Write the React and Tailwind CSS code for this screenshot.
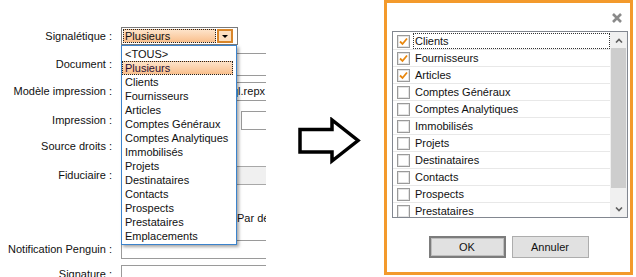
import React from "react";

const dropItems = [
  "<TOUS>",
  "Plusieurs",
  "Clients",
  "Fournisseurs",
  "Articles",
  "Comptes Généraux",
  "Comptes Analytiques",
  "Immobilisés",
  "Projets",
  "Destinataires",
  "Contacts",
  "Prospects",
  "Prestataires",
  "Emplacements",
];

const listItems = [
  ["Clients", true],
  ["Fournisseurs", true],
  ["Articles", true],
  ["Comptes Généraux", false],
  ["Comptes Analytiques", false],
  ["Immobilisés", false],
  ["Projets", false],
  ["Destinataires", false],
  ["Contacts", false],
  ["Prospects", false],
  ["Prestataires", false],
];

function Label({ children }) {
  return (
    <div className="w-[112px] flex-none text-right whitespace-nowrap text-[#111]">
      {children}
    </div>
  );
}

function LeftPanel() {
  return (
    <div className="relative w-[266px] h-[277px] flex-none overflow-hidden bg-white">
      <div className="flex flex-col pt-[27px]">
        {/* Signalétique */}
        <div className="flex items-center h-[18px]">
          <Label>Signalétique :</Label>
          <div className="ml-[9px] w-[117px] h-[18px] flex-none border border-[#7a7a7a] bg-white flex items-center pl-[1px] gap-[1px]">
            <div className="w-[93px] h-[14px] border border-dotted border-[#222] bg-gradient-to-b from-[#fde3c9] to-[#f9bf8c] flex items-center pl-[1px] leading-none text-[#111]">
              Plusieurs
            </div>
            <div className="w-[16px] h-[14px] border-2 border-[#d9862a] bg-[#fde0c0] flex items-center justify-center">
              <svg width="6" height="3" viewBox="0 0 6 3">
                <path d="M0 0 L6 0 L3 3 Z" fill="#000" />
              </svg>
            </div>
          </div>
        </div>
        {/* Document */}
        <div className="flex items-center h-[23px] mt-[8px]">
          <Label>Document :</Label>
          <div className="ml-[9px] w-[200px] h-[23px] flex-none border border-[#9a9a9a] bg-white" />
        </div>
        {/* Modèle impression */}
        <div className="flex items-center h-[19px] mt-[6px]">
          <Label>Modèle impression :</Label>
          <div className="ml-[9px] w-[150px] h-[19px] flex-none border border-[#9a9a9a] bg-white flex items-center justify-end pr-[5px] overflow-hidden whitespace-nowrap text-[#111]">
            C:\Modeles\SignaletiqueSql.repx
          </div>
        </div>
        {/* Impression */}
        <div className="flex items-center h-[19px] mt-[10px]">
          <Label>Impression :</Label>
          <div className="ml-[129px] w-[60px] h-[19px] flex-none border border-[#9a9a9a] bg-white" />
        </div>
        {/* Source droits */}
        <div className="flex items-center h-[19px] mt-[7px]">
          <Label>Source droits :</Label>
        </div>
        {/* Fiduciaire */}
        <div className="flex items-center h-[19px] mt-[10px]">
          <Label>Fiduciaire :</Label>
          <div className="ml-[9px] w-[200px] h-[19px] flex-none border border-[#a8a8a8] bg-[#f0f0f0]" />
        </div>
        {/* Par défaut */}
        <div className="flex items-center h-[19px] mt-[24px]">
          <div className="ml-[237px] whitespace-nowrap text-[#111]">Par défaut</div>
        </div>
        {/* Notification Penguin */}
        <div className="flex items-center h-[19px] mt-[12px]">
          <Label>Notification Penguin :</Label>
          <div className="ml-[9px] w-[200px] h-[19px] flex-none border border-[#9a9a9a] bg-white" />
        </div>
        {/* next row */}
        <div className="flex items-center h-[19px] mt-[6px]">
          <Label>Signature :</Label>
          <div className="ml-[9px] w-[200px] h-[19px] flex-none border border-[#9a9a9a] bg-white" />
        </div>
      </div>

      {/* Dropdown list overlay */}
      <div className="absolute left-[121px] top-[45px] w-[116px] h-[200px] border border-[#3b83cc] bg-white shadow-[2px_2px_3px_rgba(0,0,0,0.35)] pt-[1px] flex flex-col">
        {dropItems.map((it) =>
          it === "Plusieurs" ? (
            <div
              key={it}
              className="h-[14px] w-[111px] border border-dotted border-[#222] bg-gradient-to-b from-[#fde3c9] to-[#f9bf8c] flex items-center pl-[2px] leading-none whitespace-nowrap text-[#2a0f33]"
            >
              {it}
            </div>
          ) : (
            <div
              key={it}
              className="h-[14px] flex items-center pl-[3px] leading-none whitespace-nowrap text-[#111]"
            >
              {it}
            </div>
          )
        )}
      </div>
    </div>
  );
}

function Arrow() {
  return (
    <div className="w-[118px] h-[277px] flex-none flex items-start pt-[117px] pl-[31px]">
      <svg width="66" height="48" viewBox="0 0 66 48">
        <path
          d="M3 12.5 L35 12.5 L35 3 L61 23.5 L35 44 L35 35 L3 35 Z"
          fill="#fff"
          stroke="#000"
          strokeWidth="3.5"
          strokeLinejoin="miter"
        />
      </svg>
    </div>
  );
}

function Check() {
  return (
    <svg width="11" height="11" viewBox="0 0 11 11">
      <path d="M2 5.5 L4.5 8 L9 2.5" fill="none" stroke="#e8870f" strokeWidth="1.8" />
    </svg>
  );
}

function Dialog() {
  return (
    <div className="w-[249px] h-[275px] flex-none border-[3px] border-[#f39a2c] bg-white flex flex-col">
      <div className="h-[28px] flex justify-end items-start pt-[10px] pr-[8px]">
        <svg width="10" height="10" viewBox="0 0 10 10">
          <path d="M1 1 L9 9 M9 1 L1 9" stroke="#8a8a8a" strokeWidth="2.6" />
        </svg>
      </div>
      <div className="ml-[5px] mr-[2px] h-[187px] border border-[#828790] flex overflow-hidden">
        <div className="flex-1 flex flex-col overflow-hidden pt-[1px]">
          {listItems.map(([name, checked], i) => (
            <div
              key={name}
              className="h-[17px] flex-none flex items-center border-b border-[#e8e8e8]"
            >
              <div className="ml-[4px] w-[13px] h-[13px] flex-none border border-[#9a9a9a] bg-white flex items-center justify-center shadow-[inset_0_0_0_1px_#e4e4e4]">
                {checked ? <Check /> : null}
              </div>
              <div
                className={
                  "ml-[3px] h-[16px] flex-1 flex items-center pl-[2px] whitespace-nowrap text-[#111] " +
                  (i === 0 ? "outline outline-1 outline-dotted outline-[#333] -outline-offset-1" : "")
                }
              >
                {name}
              </div>
            </div>
          ))}
        </div>
        <div className="w-[17px] flex-none bg-[#f0f0f0] flex flex-col">
          <div className="h-[16px] flex items-center justify-center">
            <svg width="8" height="5" viewBox="0 0 8 5">
              <path d="M1 4.5 L4 1.5 L7 4.5" fill="none" stroke="#606060" strokeWidth="1.6" />
            </svg>
          </div>
          <div className="h-[140px] mx-[1px] bg-[#cdcdcd]" />
          <div className="flex-1" />
          <div className="h-[16px] flex items-center justify-center">
            <svg width="8" height="5" viewBox="0 0 8 5">
              <path d="M1 0.5 L4 3.5 L7 0.5" fill="none" stroke="#606060" strokeWidth="1.6" />
            </svg>
          </div>
        </div>
      </div>
      <div className="mt-[18px] flex justify-center gap-[6px]">
        <div className="w-[77px] h-[22px] border-2 border-[#7c7c7c] bg-[#e1e1e1] flex items-center justify-center text-[#111] shadow-[inset_0_0_0_1px_#bdbdbd]">
          OK
        </div>
        <div className="w-[77px] h-[22px] border border-[#adadad] bg-[#e1e1e1] flex items-center justify-center text-[#111]">
          Annuler
        </div>
      </div>
    </div>
  );
}

export default function App() {
  return (
    <div className="w-[636px] h-[277px] bg-white flex overflow-hidden font-['Liberation_Sans',Arial,sans-serif] text-[11px] leading-[13px]">
      <LeftPanel />
      <Arrow />
      <Dialog />
    </div>
  );
}
